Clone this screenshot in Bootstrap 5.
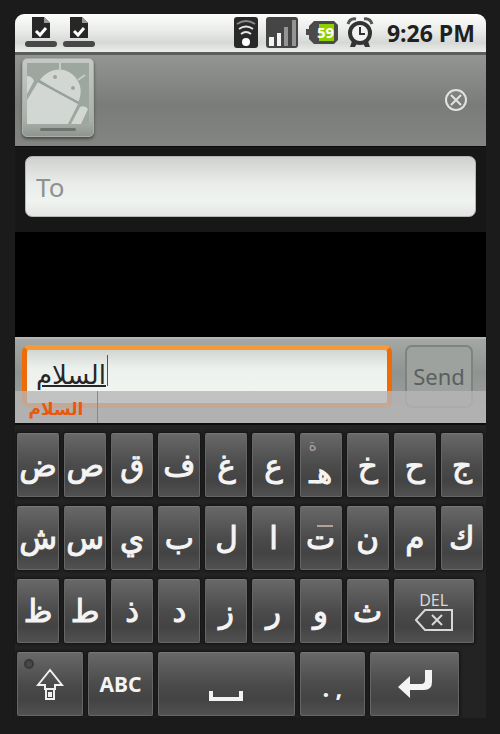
<!DOCTYPE html>
<html lang="en">
<head>
<meta charset="utf-8">
<meta name="viewport" content="width=device-width, initial-scale=1">
<title>New message</title>
<link rel="stylesheet" href="https://cdn.jsdelivr.net/npm/bootstrap@5.3.0/dist/css/bootstrap.min.css">
<style>
body{background:#1b1b1b;font-family:"Noto Sans","DejaVu Sans",sans-serif;padding:14px 14px 15px 15px}
svg{display:block;flex:none}
.status{height:38px;background:linear-gradient(#fdfefc,#e9ebe8 45%,#d6d8d5 75%,#eceeeb);border-radius:9px 9px 0 0;padding:0 11px 0 9px}
.clock{font:700 23px/38px "Open Sans","Noto Sans",sans-serif;color:#202020;margin-left:5px}
.contact{height:94px;background:linear-gradient(#939592,#7a7c79 55%,#838582);border-top:3px solid #5c5e5b;padding:3px 18px 0 7px}
.photo{border-radius:5px;border:1px solid #a9aeaa;background:linear-gradient(#c4c9c5,#a8b0a9 80%,#8f9690);box-shadow:0 2px 3px #4a4c49;padding:4px 4px 12px;position:relative}
.photo::after{content:"";position:absolute;left:17px;right:17px;bottom:5px;height:3px;border-radius:2px;background:#6d736e}
.plain{border:0;background:none;padding:0}
.recipient{background:#171717;padding:9px 10px 15px;border-top:1px solid #0c0c0c}
.recipient .form-control{height:61px;border:1px solid #b4b6b3;border-radius:7px;background:linear-gradient(#cfd1ce,#e9ecea 45%,#f0f4f0 75%,#e2e5e1);font-size:26px;line-height:36px;padding:0 10px;color:#555}
.recipient .form-control::placeholder{color:#8f918e;opacity:1}
.thread{height:105px;background:#000}
.compose{height:86px;background:linear-gradient(#a4a8a5,#8f9492 40%,#a0a3a1);border-top:2px solid #b4b6b4;padding:6px 13px 0 7px;gap:13px;position:relative}
.field{border:5px solid #f57c0c;border-color:#f69a35 #ee6c08 #f07a18;border-radius:7px;height:63px;background:linear-gradient(#d2d6d3,#edf1ee 35%,#f2f5f2);position:relative}
.field input{height:53px;border:0;border-radius:0;background:none;font:26px/36px "DejaVu Sans",sans-serif;padding:0 9px 3px;color:#262626;text-decoration:underline;text-decoration-thickness:2px}
.caret{position:absolute;left:80px;top:5px;width:1px;height:31px;background:#555}
.send{width:68px;height:63px;border:2px solid #7f8380;border-radius:7px;background:#9da29f;color:#5b5f5d;font-size:22px;padding:0}
.suggest{position:absolute;left:0;right:0;bottom:0;height:32px;background:#b6b5b7cc}
.suggest button{width:83px;height:32px;border-right:1px solid #888;color:#e9580c;font:700 17px/28px "DejaVu Sans",sans-serif;padding-top:4px}
.keyboard{background:#232323;border-top:2px solid #0d0d0d;padding:8px 0 2px;gap:9px}
.key{width:calc(10% - 5px);height:64px;margin:0 3px 0 2px;flex:none;border:1px solid #666;border-top-color:#777;border-radius:2px;background:linear-gradient(#686868,#4b4b4b 50%,#434343 75%,#515151);box-shadow:0 0 3px 1px #111;color:#f4f4f4;padding:0;font:31px/56px "DejaVu Sans",sans-serif;-webkit-text-stroke:1px;display:flex;justify-content:center;align-items:center;position:relative;white-space:nowrap}
.key-15{width:calc(15% - 5px)}
.key-18{width:calc(18% - 5px)}
.key-20{width:calc(20% - 5px)}
.key-30{width:calc(30% - 5px)}
.stacked{flex-direction:column;align-items:stretch;justify-content:flex-start}
.hint{color:#b09c99;font-size:16px;line-height:24px;padding-right:16px;-webkit-text-stroke:0}
.base{font-size:28px;line-height:32px}
.bar-hint{position:absolute;left:16px;top:18px;width:16px;height:2px;background:#b3a19e}
.latin{font:700 21px/24px "Noto Sans",sans-serif;-webkit-text-stroke:0}
.punct{font-size:24px;padding-top:8px}
.del{font:16px/18px "Noto Sans",sans-serif;color:#d8d8d8;-webkit-text-stroke:0}
.led{position:absolute;left:6px;top:6px;width:10px;height:10px;border-radius:50%;border:2px solid #383838;background:#484848}
</style>
<script src="https://cdn.jsdelivr.net/npm/bootstrap@5.3.0/dist/js/bootstrap.bundle.min.js"></script>
</head>
<body>
<header>
  <div class="status d-flex align-items-center">
    <div class="d-flex gap-1 me-auto">
      <svg width="34" height="34" viewBox="0 0 34 34"><path d="M8 1h12l6 6v15H8z" fill="#272727"/><path d="M20 1v6h6z" fill="#999"/><path d="m12 15 4 4 6-7" fill="none" stroke="#fff" stroke-width="3"/><rect x="1" y="25" width="32" height="6" rx="3" fill="#484848"/></svg>
      <svg width="34" height="34" viewBox="0 0 34 34"><path d="M8 1h12l6 6v15H8z" fill="#272727"/><path d="M20 1v6h6z" fill="#999"/><path d="m12 15 4 4 6-7" fill="none" stroke="#fff" stroke-width="3"/><rect x="1" y="25" width="32" height="6" rx="3" fill="#484848"/></svg>
    </div>
    <div class="d-flex align-items-center gap-2">
      <svg width="24" height="32" viewBox="0 0 24 32"><rect width="24" height="31" rx="3" fill="#292929"/><g fill="none" stroke="#e5e5e5" stroke-width="2"><path d="M3 7q9-6 18 0" stroke="#888"/><path d="M5 12q7-5 14 0"/><path d="M7 17q5-4 10 0"/></g><circle cx="12" cy="25" r="4" fill="#fff"/></svg>
      <svg width="32" height="32" viewBox="0 0 32 32"><rect width="32" height="31" rx="3" fill="#454545"/><path d="M3 20h5v9H3zM11 16h4v13h-4z" fill="#f3f3f3"/><path d="M18 10h4v19h-4zM26 3h4v26h-4z" fill="#949494"/></svg>
      <svg class="ms-n1" width="32" height="26" viewBox="0 0 32 26"><path d="M0 9h3V6l5-5h20l4 4v15l-4 4H8l-5-5v-4H0z" fill="#4a4a4a"/><path d="M13 4h15v17H13z" fill="#8fd000"/><text x="11" y="18" font-family="Noto Sans" font-size="15" font-weight="700" fill="#fff">59</text></svg>
      <svg width="28" height="32" viewBox="0 0 28 32"><path d="M2 7q2-6 8-5M26 7q-2-6-8-5" fill="none" stroke="#555" stroke-width="3"/><path d="m6 24-2 6h5l2-4M22 24l2 6h-5l-2-4" fill="#333"/><circle cx="14" cy="16" r="10" fill="#f2f2f2" stroke="#333" stroke-width="4"/><path d="M14 10v7h5" fill="none" stroke="#333" stroke-width="2"/></svg>
      <span class="clock">9:26 PM</span>
    </div>
  </div>
  <div class="contact d-flex align-items-start justify-content-between">
    <div class="photo">
      <svg width="62" height="61" viewBox="0 0 62 61"><rect width="62" height="61" fill="#9da69f"/><g fill="#d3d7d4"><path d="M13 17C22 4 39 3 48 14c7 8 7 17 3 26z"/><path d="M11 19 51 41 41 61H0V37z"/><path d="M0 13q5 0 7 5L0 31zM53 44q5-2 8 2l-7 15H44z"/></g><path d="M33 0v8M51 17l7-5" stroke="#c6cdc7" stroke-width="2"/><path d="m11 18 41 22" stroke="#98a19a" stroke-width="2"/><circle cx="28" cy="14" r="2" fill="#9da69f"/><circle cx="46" cy="25" r="2" fill="#9da69f"/></svg>
    </div>
    <button class="plain align-self-center pb-1" aria-label="Close"><svg width="24" height="24" viewBox="0 0 24 24" fill="none" stroke="#e2e3e1" stroke-width="2"><circle cx="12" cy="12" r="10"/><path d="m7 7 10 10M17 7 7 17"/></svg></button>
  </div>
</header>
<main>
  <div class="recipient"><input class="form-control" type="text" placeholder="To" aria-label="To"></div>
  <div class="thread"></div>
  <form class="compose d-flex">
    <div class="field flex-grow-1"><input class="form-control" type="text" value="السلام" aria-label="Message"><span class="caret"></span></div>
    <button class="send" type="button">Send</button>
    <div class="suggest"><button class="plain" type="button">السلام</button></div>
  </form>
</main>
<section class="keyboard d-flex flex-column" aria-label="Keyboard">
  <div class="d-flex">
    <button class="key">ض</button><button class="key">ص</button><button class="key">ق</button><button class="key">ف</button><button class="key">غ</button><button class="key">ع</button><button class="key stacked"><span class="hint">ة</span><span class="base">هـ</span></button><button class="key">خ</button><button class="key">ح</button><button class="key">ج</button>
  </div>
  <div class="d-flex">
    <button class="key">ش</button><button class="key">س</button><button class="key">ي</button><button class="key">ب</button><button class="key">ل</button><button class="key">ا</button><button class="key">ت<span class="bar-hint"></span></button><button class="key">ن</button><button class="key">م</button><button class="key">ك</button>
  </div>
  <div class="d-flex">
    <button class="key">ظ</button><button class="key">ط</button><button class="key">ذ</button><button class="key">د</button><button class="key">ز</button><button class="key">ر</button><button class="key">و</button><button class="key">ث</button>
    <button class="key key-18 del flex-column">DEL<svg width="38" height="22" viewBox="0 0 38 22" fill="none" stroke="#d8d8d8" stroke-width="2"><path d="M10 1h27v20H10L1 11z"/><path d="m17 6 10 10M27 6 17 16"/></svg></button>
  </div>
  <div class="d-flex">
    <button class="key key-15" aria-label="Shift"><span class="led"></span><svg width="28" height="34" viewBox="0 0 28 34" fill="none" stroke="#f0f0f0" stroke-width="2"><path d="M14 3 2 18h7v4h10v-4h7zM10 22h8v10h-8zM13 26h2v3h-2z"/></svg></button>
    <button class="key key-15 latin">ABC</button>
    <button class="key key-30 pt-4" aria-label="Space"><svg width="34" height="10" viewBox="0 0 34 10"><path d="M2 0v8h30V0" fill="none" stroke="#f2f2f2" stroke-width="4"/></svg></button>
    <button class="key key-15 latin punct">. ,</button>
    <button class="key key-20" aria-label="Enter"><svg width="34" height="30" viewBox="0 0 34 30"><path d="M0 18 12 7v8h11q4 0 4-4V1h7v12q0 8-8 8H12v8z" fill="#f4f4f4"/></svg></button>
  </div>
</section>
</body>
</html>
